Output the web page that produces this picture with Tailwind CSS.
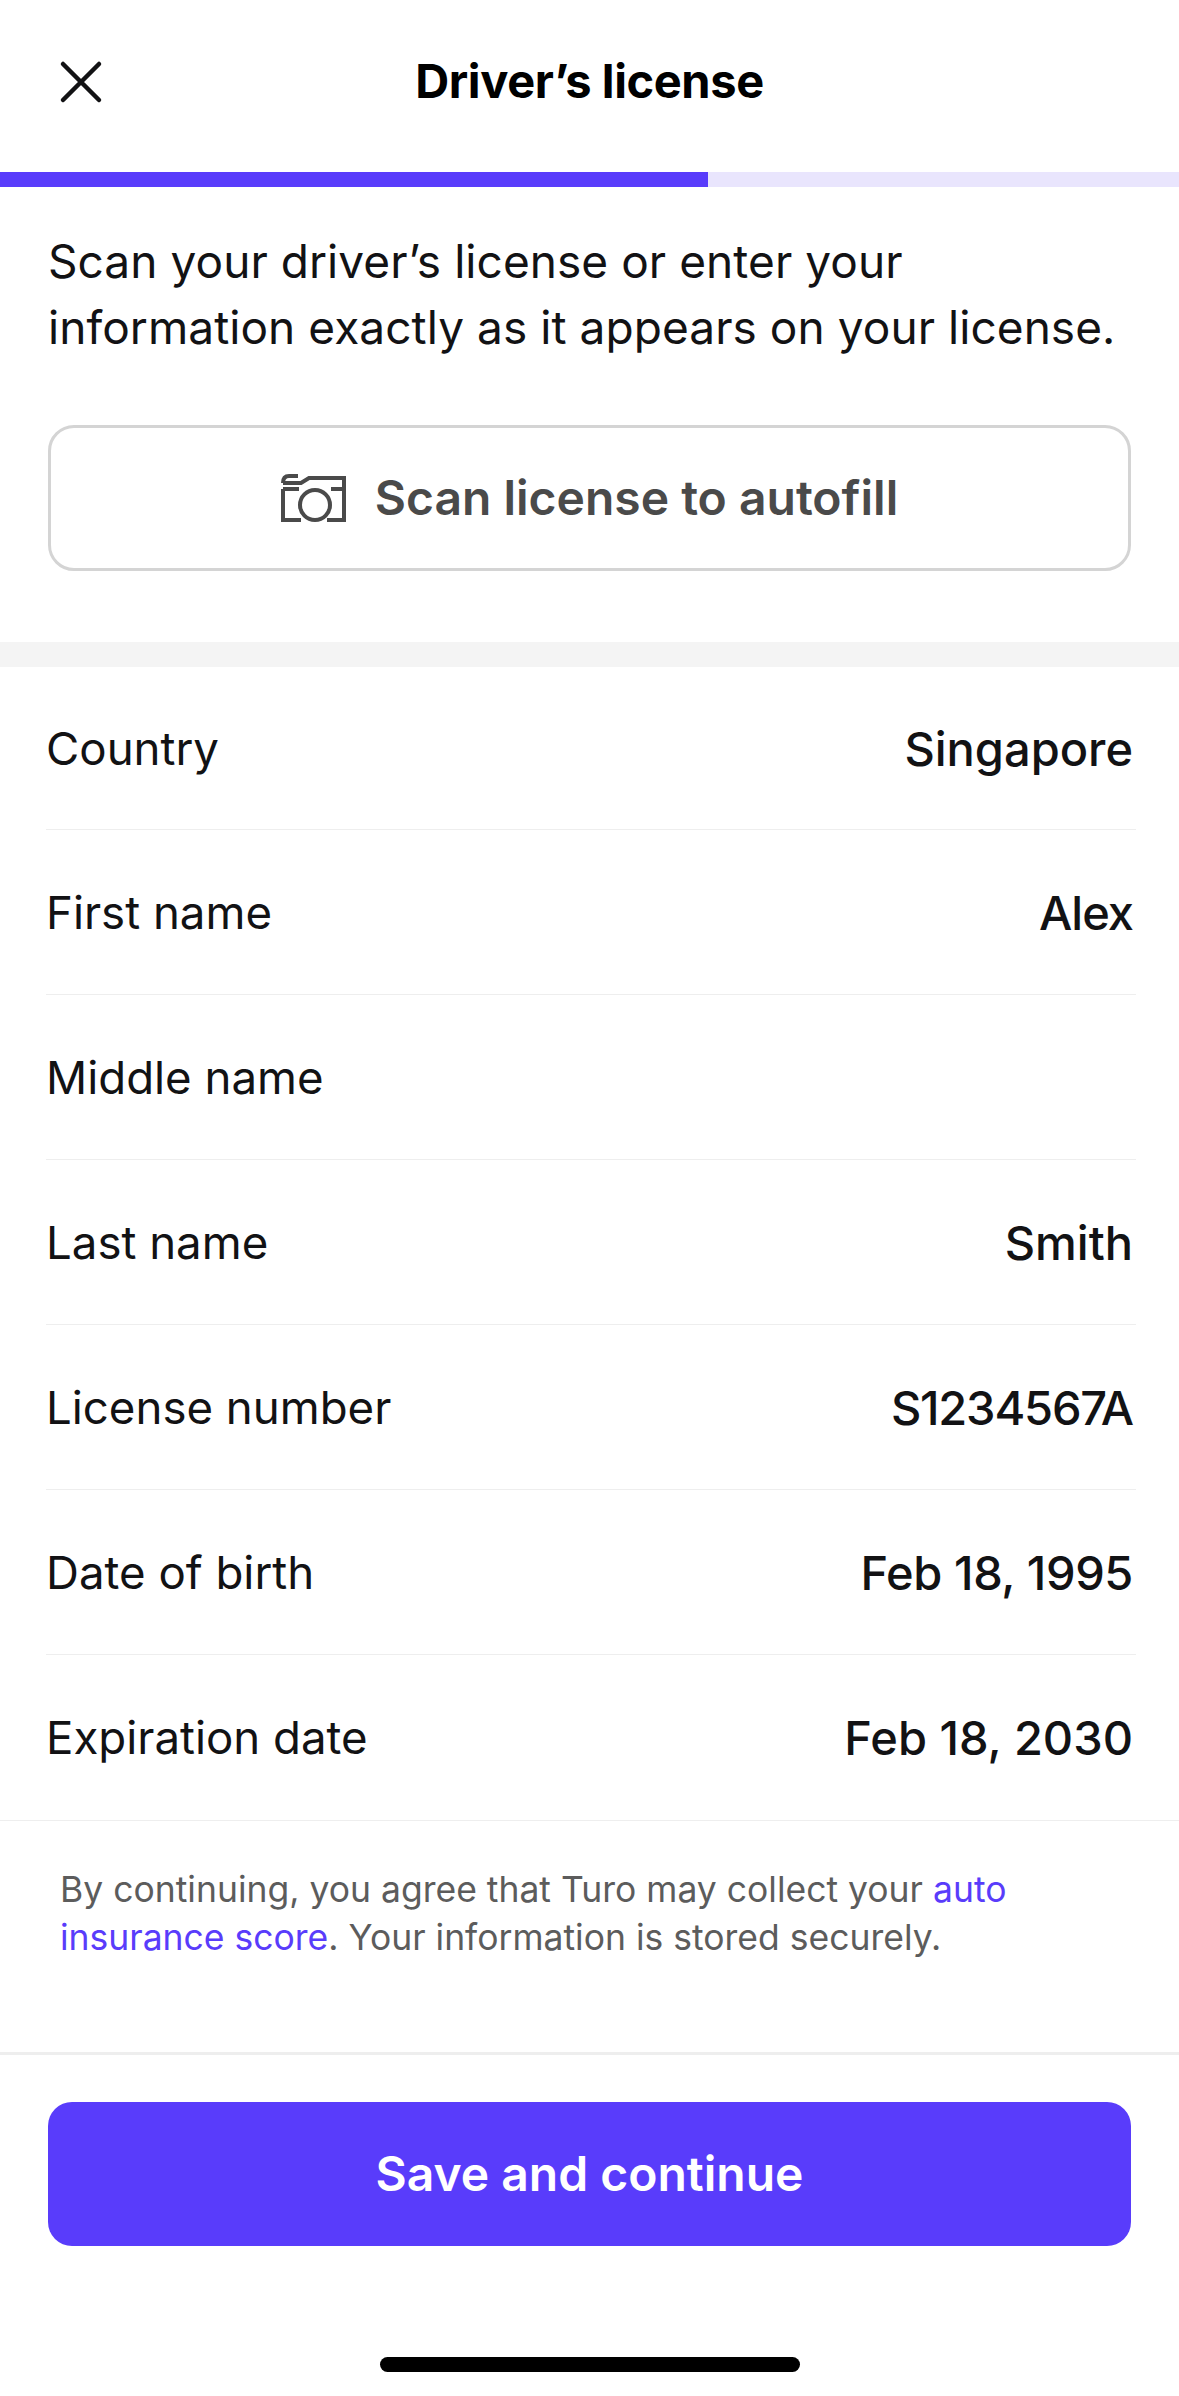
<!DOCTYPE html>
<html lang="en">
<head>
    <meta charset="UTF-8">
    <meta name="viewport" content="width=device-width, initial-scale=1.0">
    <title>Driver's license</title>
    <script src="https://cdn.jsdelivr.net/npm/@tailwindcss/browser@4"></script>
</head>
<body class="bg-white font-['Inter',sans-serif] text-[#121214]">
    <div class="flex flex-col w-[1179px] h-[2396px] overflow-hidden">
        <header class="relative flex items-center justify-center h-[172px] pb-[10px]">
            <button class="absolute left-[55px] top-[56px]">
                <svg width="52" height="52" viewBox="0 0 52 52" fill="none" stroke="#121214" stroke-width="4.5" stroke-linecap="round"><path d="M8 8 L44 44 M44 8 L8 44"/></svg>
            </button>
            <h1 class="text-[47px] font-bold tracking-[-0.4px] text-black">Driver’s license</h1>
        </header>

        <div class="flex h-[15px] bg-[#e9e5fd]">
            <div class="w-[708px] bg-[#593cfb]"></div>
        </div>

        <section class="px-[48px] pt-[41px]">
            <p class="text-[46px] leading-[66px] tracking-[0.06px]">Scan your driver’s license or enter your<br>information exactly as it appears on your license.</p>
            <button class="flex items-center justify-center gap-[28px] w-full h-[146px] mt-[65px] rounded-[26px] border-[3px] border-[#d4d4d4] text-[48px] font-semibold text-[#4a4a4a]">
                <svg width="66" height="48" viewBox="0 0 66 48" fill="none" stroke="#4a4a4a" stroke-width="4"><path d="M2 9 Q2 2 8 2 H17 M2 9 H20 L28 4 H63 V46 H46 M2 15 H18 M2 15 V46 H20 M50 15 H63"/><circle cx="34" cy="31" r="15"/></svg>
                <span>Scan license to autofill</span>
            </button>
        </section>

        <div class="h-[25px] mt-[71px] bg-[#f4f4f4]"></div>

        <section class="pl-[46px] pr-[43px]">
            <div class="flex items-center justify-between h-[163px] pt-[2px] border-b border-[#eeeeee] text-[45.6px]"><span>Country</span><span class="mr-[3px] font-medium text-[47px]">Singapore</span></div>
            <div class="flex items-center justify-between h-[165px] pt-[2px] border-b border-[#eeeeee] text-[45.6px]"><span>First name</span><span class="mr-[3px] font-medium text-[47px] tracking-[-1px]">Alex</span></div>
            <div class="flex items-center justify-between h-[165px] pt-[2px] border-b border-[#eeeeee] text-[45.6px]"><span>Middle name</span></div>
            <div class="flex items-center justify-between h-[165px] pt-[2px] border-b border-[#eeeeee] text-[45.6px]"><span>Last name</span><span class="mr-[3px] font-medium text-[47px]">Smith</span></div>
            <div class="flex items-center justify-between h-[165px] pt-[2px] border-b border-[#eeeeee] text-[45.6px]"><span>License number</span><span class="mr-[3px] font-medium text-[47px] tracking-[-1.2px]">S1234567A</span></div>
            <div class="flex items-center justify-between h-[165px] pt-[2px] border-b border-[#eeeeee] text-[45.6px]"><span>Date of birth</span><span class="mr-[3px] font-medium text-[47px] tracking-[-0.4px]">Feb 18, 1995</span></div>
            <div class="flex items-center justify-between h-[165px] pt-[2px] text-[45.6px]"><span>Expiration date</span><span class="mr-[3px] font-medium text-[47px]">Feb 18, 2030</span></div>
        </section>

        <section class="h-[232px] border-t border-[#eeeeee] px-[60px] pt-[45px]">
            <p class="text-[35.5px] leading-[48px] text-[#5c5c5c]">By continuing, you agree that Turo may collect your <a class="text-[#593cfb]">auto</a><br><a class="text-[#593cfb]">insurance score</a>. Your information is stored securely.</p>
        </section>

        <footer class="flex flex-col items-center border-t-[3px] border-[#eeeeee] px-[48px] pt-[47px]">
            <button class="w-full h-[144px] rounded-[24px] bg-[#593cfb] text-white text-[48px] font-semibold">Save and continue</button>
            <div class="w-[420px] h-[15px] mt-[111px] rounded-full bg-black"></div>
        </footer>
    </div>
</body>
</html>
